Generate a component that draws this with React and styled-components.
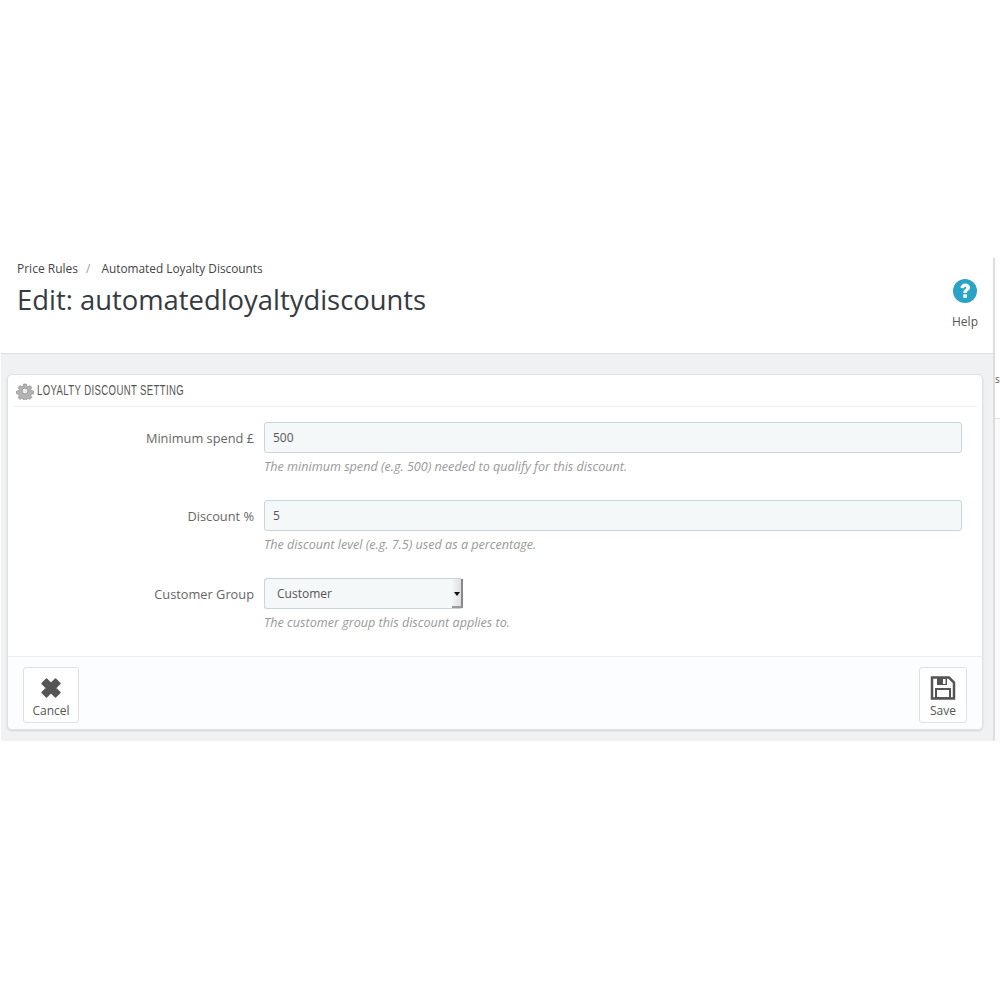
import React from "react";
import styled, { createGlobalStyle } from "styled-components";

const Global = createGlobalStyle`
  html, body { margin: 0; padding: 0; background: #fff; }
  body { font-family: "Open Sans", "Liberation Sans", sans-serif; color: #555; }
`;

const Page = styled.div`
  width: 1000px;
  height: 1000px;
  overflow: hidden;
  padding-top: 258px;
  box-sizing: border-box;
  display: flex;
`;
const Main = styled.div`
  width: 994px;
  margin-left: 1px;
  height: 483px;
  border-right: 2px solid #dcdee0;
  box-sizing: border-box;
  display: flex;
  flex-direction: column;
`;
const Side = styled.div`
  width: 5px;
  height: 483px;
  padding-top: 113px;
  box-sizing: border-box;
  font-size: 10px;
  line-height: 16px;
  color: #555;
  white-space: nowrap;
`;
const SideRule = styled.div`
  height: 323px;
  background: #fafafa;
  border-top: 1px solid #ddd;
  margin-top: 31px;
`;
const Header = styled.header`
  height: 96px;
  box-sizing: border-box;
  padding: 2px 16px 0;
  border-bottom: 1px solid #dcdedf;
  display: flex;
  justify-content: space-between;
  background: #fff;
`;
const Crumbs = styled.div`
  font-size: 12px;
  line-height: 16px;
  color: #444;
  display: flex;
  align-items: baseline;
`;
const Slash = styled.span`
  color: #999;
  margin: 0 10px 0 8px;
`;
const CrumbLast = styled.span`
  font-size: 11.85px;
  margin-left: 1px;
`;
const Title = styled.h1`
  margin: 6px 0 0;
  font-weight: 400;
  font-size: 27.4px;
  line-height: 34px;
  color: #363a41;
`;
const HelpLink = styled.div`
  width: 56px;
  margin: 19px -16px 0 0;
  display: flex;
  flex-direction: column;
  align-items: center;
  gap: 11px;
  font-size: 12px;
  line-height: 16px;
  color: #555;
`;
const Body = styled.div`
  flex: 1;
  background: #eff1f2;
  padding: 20px 10px 11px 6px;
`;
const Panel = styled.section`
  background: #fff;
  border: 1px solid #dfe1e3;
  border-radius: 5px;
  box-shadow: 0 1px 2px rgba(0, 0, 0, 0.12);
  height: 356px;
  box-sizing: border-box;
  display: flex;
  flex-direction: column;
  overflow: hidden;
`;
const PanelHead = styled.div`
  margin: 0 5px;
  height: 31px;
  border-bottom: 1px solid #eeeeee;
  display: flex;
  align-items: center;
  gap: 1px;
  padding-left: 3px;
  font-family: "Liberation Sans", sans-serif;
  font-size: 14px;
  letter-spacing: 0.55px;
  color: #555;
  text-transform: uppercase;
`;
const HeadText = styled.span`
  display: inline-block;
  transform: scaleX(0.684) translateY(-1px);
  transform-origin: left center;
  white-space: nowrap;
  margin-left: 2px;
`;
const Form = styled.div`
  flex: 1;
  padding-top: 15px;
  display: flex;
  flex-direction: column;
  gap: 25px;
`;
const Row = styled.div`
  display: grid;
  grid-template-columns: 246px 698px;
  column-gap: 10px;
`;
const Label = styled.label`
  font-size: 12.8px;
  line-height: 33px;
  text-align: right;
  color: #666;
`;
const Field = styled.div`
  height: 31px;
  box-sizing: border-box;
  background: #f5f8f9;
  border: 1px solid #c7d6db;
  border-radius: 3px;
  padding-left: 8px;
  font-size: 12px;
  line-height: 29px;
  color: #555;
`;
const SelectBox = styled(Field)`
  width: 199px;
  position: relative;
  padding-left: 12px;
  border-right: none;
  line-height: 30px;
`;
const Arrow = styled.span`
  position: absolute;
  right: 0;
  top: 0;
  bottom: 0;
  width: 11px;
  box-sizing: border-box;
  background: linear-gradient(90deg, #f5f6f6, #dedede);
  border-right: 2px solid #888;
  border-bottom: 2px solid #999;
  &::after {
    content: "";
    position: absolute;
    left: 2px;
    top: 13px;
    border: 3px solid transparent;
    border-top: 4px solid #111;
    border-bottom: 0;
  }
`;
const Hint = styled.p`
  grid-column: 2;
  margin: 4px 0 0;
  font-size: 12.6px;
  line-height: 16px;
  font-style: italic;
  color: #999;
`;
const Footer = styled.div`
  height: 73px;
  box-sizing: border-box;
  background: #fcfdfe;
  border-top: 1px solid #eeeeee;
  padding: 10px 15px 6px;
  display: flex;
  justify-content: space-between;
`;
const ActionBtn = styled.button`
  width: ${(p) => p.$w}px;
  height: 56px;
  padding: 8px 0 0;
  background: #fff;
  border: 1px solid #dfe1e3;
  border-radius: 3px;
  display: flex;
  flex-direction: column;
  align-items: center;
  gap: 3px;
  font-family: inherit;
  font-size: 12px;
  line-height: 16px;
  color: #555;
`;

const Gear = () => (
  <svg width="18" height="18" viewBox="0 0 24 24" fill="#b4b4b4" stroke="#8a8a8a" strokeWidth="1">
    <path d="M10 2h4l.6 3 2 .9 2.600-1.700 2.800 2.800-1.700 2.600.9 2 3 .6v4l-3 .6-.9 2 1.700 2.600-2.800 2.800-2.600-1.700-2 .9-.6 3h-4l-.6-3-2-.9-2.600 1.700-2.800-2.800 1.700-2.600-.9-2-3-.6v-4l3-.6.9-2-1.700-2.600 2.800-2.800 2.600 1.700 2-.9z" transform="scale(.92) translate(1 1)" />
    <circle cx="12" cy="12" r="4" fill="#ececec" />
  </svg>
);
const HelpIcon = () => (
  <svg width="24" height="24" viewBox="0 0 24 24">
    <circle cx="12" cy="12" r="12" fill="#2ba3c6" />
    <path d="M7.500 9C7.600 6.300 9.600 4.500 12.300 4.500c2.700 0 4.700 1.700 4.700 4.100 0 3.200-3.200 3.100-3.200 5.400h-3.500c0-3.500 2.900-3.500 2.900-5.200 0-.7-.4-1.100-1-1.100-.7 0-1.100.5-1.200 1.500z" fill="#fff" />
    <rect x="10.300" y="15.300" width="3.500" height="3.500" fill="#fff" />
  </svg>
);
const CloseIcon = () => (
  <svg width="22" height="24" viewBox="0 -1 22 24">
    <path d="M6.500 2 11 6.500 15.500 2 20 6.500 15.500 11 20 15.500 15.500 20 11 15.500 6.500 20 2 15.500 6.500 11 2 6.500z" fill="#555" stroke="#555" strokeWidth="1.500" strokeLinejoin="round" />
  </svg>
);
const SaveIcon = () => (
  <svg width="26" height="24" viewBox="0 0 26 24">
    <path d="M2 1.500h17l5 5v16H2z" fill="none" stroke="#555" strokeWidth="2.500" />
    <rect x="7" y="2" width="10" height="7" fill="#555" />
    <rect x="13" y="3" width="2.500" height="5" fill="#fff" />
    <rect x="6" y="13" width="14" height="9" fill="none" stroke="#555" strokeWidth="2" />
  </svg>
);

const fields = [
  { label: "Minimum spend £", value: "500", hint: "The minimum spend (e.g. 500) needed to qualify for this discount." },
  { label: "Discount %", value: "5", hint: "The discount level (e.g. 7.5) used as a percentage." },
];

export default function App() {
  return (
    <Page>
      <Global />
      <Main>
        <Header>
          <div>
            <Crumbs>
              <span>Price Rules</span>
              <Slash>/</Slash>
              <CrumbLast>Automated Loyalty Discounts</CrumbLast>
            </Crumbs>
            <Title>Edit: automatedloyaltydiscounts</Title>
          </div>
          <HelpLink>
            <HelpIcon />
            Help
          </HelpLink>
        </Header>
        <Body>
          <Panel>
            <PanelHead>
              <Gear />
              <HeadText>Loyalty Discount Setting</HeadText>
            </PanelHead>
            <Form>
              {fields.map((f) => (
                <Row key={f.label}>
                  <Label>{f.label}</Label>
                  <Field>{f.value}</Field>
                  <Hint>{f.hint}</Hint>
                </Row>
              ))}
              <Row>
                <Label>Customer Group</Label>
                <SelectBox>
                  Customer
                  <Arrow />
                </SelectBox>
                <Hint>The customer group this discount applies to.</Hint>
              </Row>
            </Form>
            <Footer>
              <ActionBtn $w={56}>
                <CloseIcon />
                Cancel
              </ActionBtn>
              <ActionBtn $w={48}>
                <SaveIcon />
                Save
              </ActionBtn>
            </Footer>
          </Panel>
        </Body>
      </Main>
      <Side>
        s
        <SideRule />
      </Side>
    </Page>
  );
}
